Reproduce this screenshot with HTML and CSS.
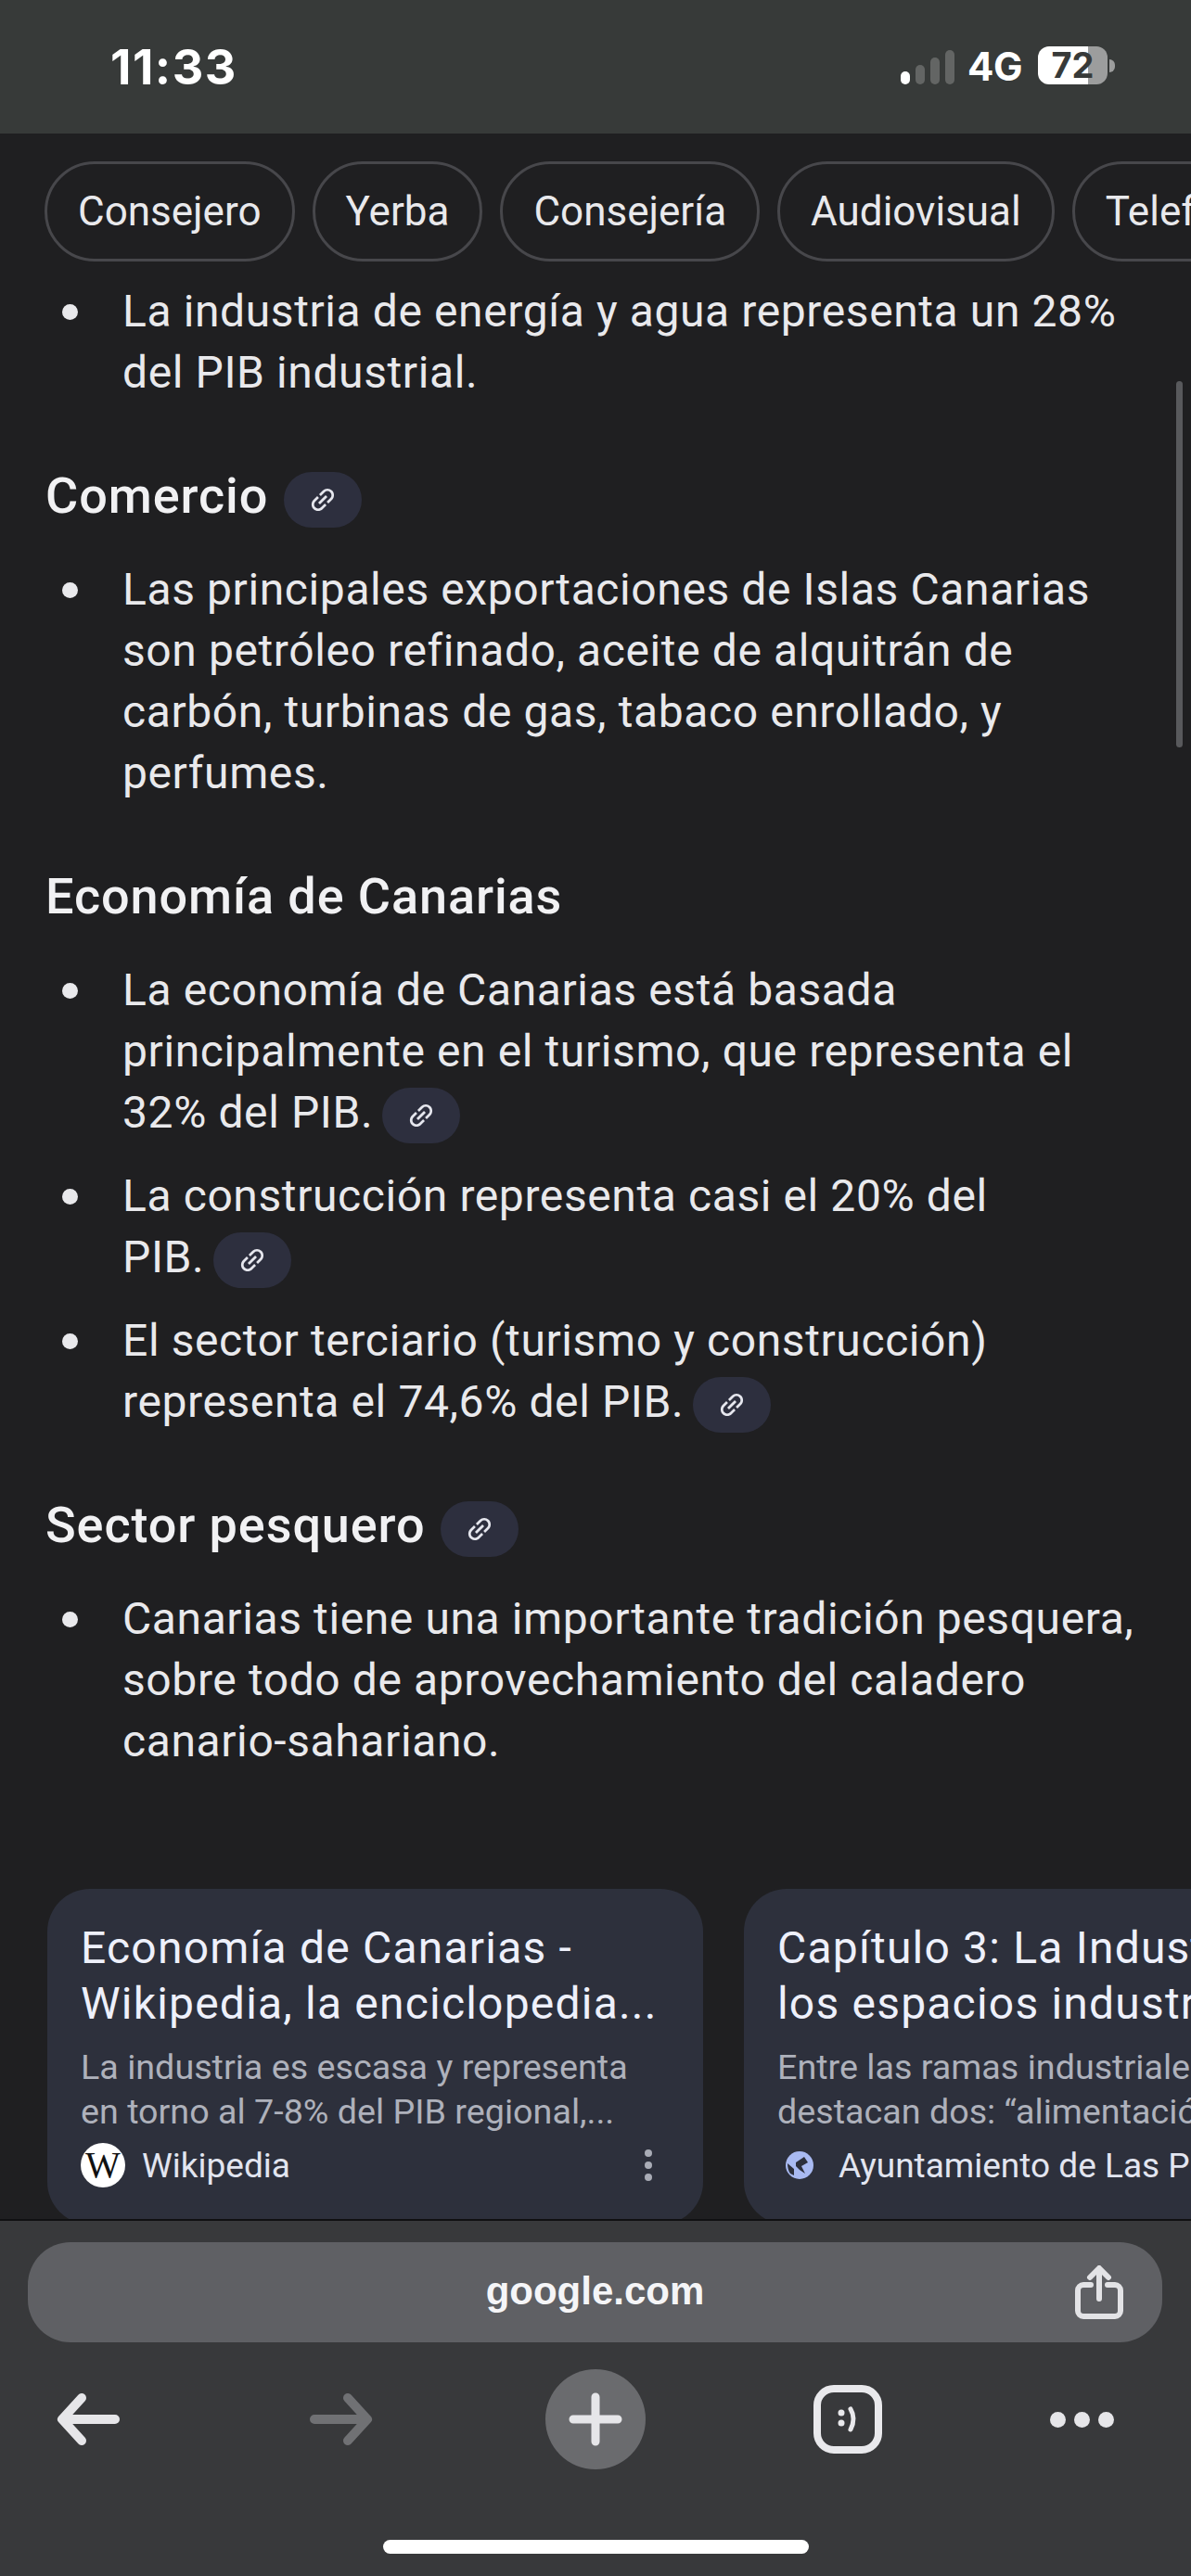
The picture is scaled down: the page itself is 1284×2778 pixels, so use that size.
FILE: index.html
```html
<!DOCTYPE html>
<html lang="es">
<head>
<meta charset="utf-8">
<title>google.com</title>
<link rel="stylesheet" href="styles.css">
</head>
<body>
<svg class="defs" width="0" height="0" aria-hidden="true">
  <symbol id="link" viewBox="0 0 24 24">
    <path transform="rotate(-45 12 12)" fill="currentColor" d="M3.9 12c0-1.71 1.39-3.1 3.1-3.1h4V7H7c-2.76 0-5 2.24-5 5s2.24 5 5 5h4v-1.9H7c-1.71 0-3.1-1.39-3.1-3.1zM8 13h8v-2H8v2zm9-6h-4v1.9h4c1.71 0 3.1 1.39 3.1 3.1s-1.39 3.1-3.1 3.1h-4V17h4c2.76 0 5-2.24 5-5s-2.24-5-5-5z"/>
  </symbol>
</svg>
<div class="phone">
  <header class="status">
    <span class="time">11:33</span>
    <div class="status-right">
      <div class="signal"><i class="bar b1"></i><i class="bar b2"></i><i class="bar b3"></i><i class="bar b4"></i></div>
      <span class="net">4G</span>
      <div class="battery"><span class="battery-body">72</span><i class="battery-cap"></i></div>
    </div>
  </header>

  <main class="content">
    <div class="scrollbar"></div>
    <nav class="chips">
      <span class="chip">Consejero</span>
      <span class="chip">Yerba</span>
      <span class="chip">Consejería</span>
      <span class="chip">Audiovisual</span>
      <span class="chip">Telefonía</span>
    </nav>

    <ul class="list first">
      <li><span>La industria de energía y agua representa un 28%<br>del PIB industrial.</span></li>
    </ul>

    <h2 class="heading">Comercio <a class="pill"><svg class="pill-icon"><use href="#link"/></svg></a></h2>
    <ul class="list">
      <li><span>Las principales exportaciones de Islas Canarias<br>son petróleo refinado, aceite de alquitrán de<br>carbón, turbinas de gas, tabaco enrollado, y<br>perfumes.</span></li>
    </ul>

    <h2 class="heading">Economía de Canarias</h2>
    <ul class="list">
      <li><span>La economía de Canarias está basada<br>principalmente en el turismo, que representa el<br>32% del PIB. <a class="pill"><svg class="pill-icon"><use href="#link"/></svg></a></span></li>
      <li><span>La construcción representa casi el 20% del<br>PIB. <a class="pill"><svg class="pill-icon"><use href="#link"/></svg></a></span></li>
      <li><span>El sector terciario (turismo y construcción)<br>representa el 74,6% del PIB. <a class="pill"><svg class="pill-icon"><use href="#link"/></svg></a></span></li>
    </ul>

    <h2 class="heading">Sector pesquero <a class="pill"><svg class="pill-icon"><use href="#link"/></svg></a></h2>
    <ul class="list">
      <li><span>Canarias tiene una importante tradición pesquera,<br>sobre todo de aprovechamiento del caladero<br>canario-sahariano.</span></li>
    </ul>

    <section class="cards">
      <article class="card">
        <h3 class="card-title">Economía de Canarias -<br>Wikipedia, la enciclopedia...</h3>
        <p class="card-text">La industria es escasa y representa<br>en torno al 7-8% del PIB regional,...</p>
        <div class="card-source">
          <span class="wiki">W</span>
          <span class="source-name">Wikipedia</span>
          <span class="kebab"><i></i><i></i><i></i></span>
        </div>
      </article>
      <article class="card">
        <h3 class="card-title">Capítulo 3: La Industria y<br>los espacios industriales</h3>
        <p class="card-text">Entre las ramas industriales<br>destacan dos: “alimentación</p>
        <div class="card-source">
          <svg class="globe" viewBox="0 0 30 30"><circle cx="15" cy="15" r="15" fill="#a9baf2"/><path fill="#2d303c" d="M11 12L20 6l4 6-7 4 4 8-6-4-4-4zM2 13l7 6v7l-4-2q-3-4-3-11z"/></svg>
          <span class="source-name">Ayuntamiento de Las Palmas</span>
        </div>
      </article>
    </section>
  </main>

  <footer class="toolbar">
    <div class="urlbar">
      <span class="url">google.com</span>
      <svg class="share" viewBox="0 0 52 58" fill="none" stroke="#e3e3e6" stroke-width="6" stroke-linecap="round" stroke-linejoin="round">
        <path d="M17 21H9a6 6 0 0 0-6 6v22a6 6 0 0 0 6 6h34a6 6 0 0 0 6-6V27a6 6 0 0 0-6-6h-8"/>
        <path d="M26 36V4M16 13L26 3l10 10"/>
      </svg>
    </div>
    <div class="nav">
      <svg class="nav-arrow" viewBox="0 0 68 56" fill="none" stroke="#e6e6e9" stroke-width="10" stroke-linecap="round" stroke-linejoin="round"><path d="M63 28H6M27 5L6 28l21 23"/></svg>
      <svg class="nav-arrow" viewBox="0 0 68 56" fill="none" stroke="#707174" stroke-width="10" stroke-linecap="round" stroke-linejoin="round"><path d="M5 28h57M41 5l21 23-21 23"/></svg>
      <div class="plus"><svg class="plus-icon" viewBox="0 0 58 58" fill="none" stroke="#e6e6e9" stroke-width="9" stroke-linecap="round"><path d="M29 5v48M5 29h48"/></svg></div>
      <svg class="tabs" viewBox="0 0 74 74" fill="none" stroke="#e9e9ec">
        <rect x="4" y="4" width="66" height="66" rx="18" stroke-width="8"/>
        <circle cx="30" cy="30" r="3.5" fill="#e9e9ec" stroke="none"/>
        <circle cx="30" cy="41" r="3.5" fill="#e9e9ec" stroke="none"/>
        <path d="M40 26q6 10 0 22" stroke-width="5" stroke-linecap="round"/>
      </svg>
      <div class="more"><i></i><i></i><i></i></div>
    </div>
    <div class="home"></div>
  </footer>
</div>
</body>
</html>
```

FILE: styles.css
```css
* { box-sizing: border-box; }
html, body { margin: 0; padding: 0; background: #1f1f21; }
.defs { display: block; height: 0; }
.phone {
  width: 1284px;
  height: 2778px;
  display: flex;
  flex-direction: column;
  overflow: hidden;
  font-family: Roboto, "Noto Sans", sans-serif;
  color: #e9e9ec;
}

/* status bar */
.status {
  height: 144px;
  flex: none;
  background: #373a39;
  display: flex;
  justify-content: space-between;
  align-items: flex-start;
  padding: 44px 82px 0 119px;
  color: #fff;
  font-family: Inter, "Liberation Sans", sans-serif;
  font-weight: 700;
}
.time { font-size: 52px; line-height: 58px; letter-spacing: 1.5px; }
.status-right { display: flex; align-items: flex-start; margin-top: 8px; }
.signal { display: flex; align-items: flex-end; gap: 6px; height: 37px; margin-top: 2px; }
.bar { display: block; width: 10px; border-radius: 5px; background: #636564; }
.b1 { height: 14px; background: #fff; }
.b2 { height: 21px; }
.b3 { height: 29px; }
.b4 { height: 37px; }
.net { font-size: 42px; line-height: 40px; margin-left: 14px; letter-spacing: -0.5px; }
.battery { display: flex; align-items: center; margin-left: 17px; margin-top: -2px; }
.battery-body {
  width: 75px;
  height: 41px;
  border-radius: 12px;
  background: linear-gradient(to right, #fff 72%, #9c9d9d 72%);
  color: #373a39;
  font-size: 38px;
  line-height: 41px;
  text-align: center;
}
.battery-cap { width: 6px; height: 14px; background: #9c9d9d; border-radius: 0 7px 7px 0; margin-left: 2px; }

/* scrolling content */
.content {
  flex: 1;
  min-height: 0;
  position: relative;
  overflow: hidden;
  padding-top: 30px;
  background: #1f1f21;
}
.scrollbar {
  position: absolute;
  top: 267px;
  left: 1268px;
  width: 7px;
  height: 395px;
  border-radius: 4px;
  background: #58595c;
}
.chips { display: flex; gap: 19px; padding-left: 48px; white-space: nowrap; }
.chip {
  flex: none;
  height: 108px;
  padding: 0 33px;
  border: 3px solid #47474b;
  border-radius: 54px;
  font-size: 44px;
  line-height: 102px;
  color: #e9e9ec;
}
.list { list-style: none; margin: 0; padding: 0 0 0 49px; display: flex; flex-direction: column; gap: 24px; }
.list.first { margin-top: 21px; }
.list li { display: flex; font-size: 48px; letter-spacing: 0.6px; line-height: 66px; color: #e9e9ec; white-space: nowrap; }
.list li::before {
  content: "";
  flex: none;
  width: 17px;
  height: 17px;
  border-radius: 50%;
  background: #e9e9ec;
  margin: 25px 48px 0 18px;
}
.heading { margin: 67px 0 35px 49px; font-size: 54px; letter-spacing: 0.9px; line-height: 66px; font-weight: 500; color: #f1f1f3; white-space: nowrap; }
.pill {
  display: inline-flex;
  align-items: center;
  justify-content: center;
  width: 84px;
  height: 60px;
  margin: -10px 0 -10px 2px;
  border-radius: 30px;
  background: #2d2f3e;
  color: #e6e7ee;
  vertical-align: middle;
}
.list .pill { margin-left: -3px; }
.pill-icon { width: 34px; height: 34px; }

/* cards */
.cards { display: flex; gap: 44px; padding-left: 51px; margin-top: 126px; }
.card {
  flex: none;
  width: 707px;
  height: 362px;
  padding: 34px 0 0 36px;
  border-radius: 46px;
  background: #2d303c;
  overflow: hidden;
  white-space: nowrap;
}
.card-title { margin: 0; font-size: 48px; letter-spacing: 1.2px; line-height: 60px; font-weight: 400; color: #eef0fb; }
.card-text { margin: 14px 0 0; font-size: 37.7px; line-height: 48px; color: #aeb1bb; }
.card-source { display: flex; align-items: center; margin-top: 10px; height: 48px; }
.wiki {
  flex: none;
  width: 48px;
  height: 48px;
  border-radius: 50%;
  background: #fff;
  color: #111;
  font-family: "Liberation Serif", serif;
  font-size: 40px;
  line-height: 48px;
  text-align: center;
}
.globe { flex: none; width: 30px; height: 30px; margin: 0 27px 0 9px; }
.source-name { font-size: 37px; color: #e2e5f0; margin-left: 18px; }
.globe + .source-name { margin-left: 0; }
.kebab { display: flex; flex-direction: column; gap: 5px; margin-left: 382px; }
.kebab i { display: block; width: 8px; height: 8px; border-radius: 50%; background: #a9acb6; }

/* bottom toolbar */
.toolbar {
  height: 385px;
  flex: none;
  background: #38393b;
  border-top: 2px solid #101012;
  padding: 23px 31px 0 30px;
  position: relative;
}
.urlbar {
  height: 108px;
  border-radius: 46px;
  background: #5f6064;
  display: flex;
  align-items: center;
  justify-content: center;
  padding-bottom: 3px;
  position: relative;
}
.url { font-family: "Liberation Sans", Arial, sans-serif; font-weight: 700; font-size: 42px; color: #f5f5f7; }
.share { position: absolute; right: 42px; top: 25px; width: 52px; height: 58px; }
.nav {
  display: grid;
  grid-template-columns: 273px 254px 289px 255px auto;
  align-items: center;
  margin-top: 29px;
  height: 108px;
  padding-left: 31px;
}
.nav-arrow { width: 68px; height: 56px; }
.plus { width: 108px; height: 108px; border-radius: 50%; background: #6a6b6e; display: flex; align-items: center; justify-content: center; }
.plus-icon { width: 58px; height: 58px; }
.tabs { width: 74px; height: 74px; }
.more { display: flex; gap: 9px; }
.more i { display: block; width: 17px; height: 17px; border-radius: 50%; background: #e6e6e9; }
.home { position: absolute; top: 344px; left: 413px; width: 459px; height: 15px; border-radius: 8px; background: #fff; }
```
